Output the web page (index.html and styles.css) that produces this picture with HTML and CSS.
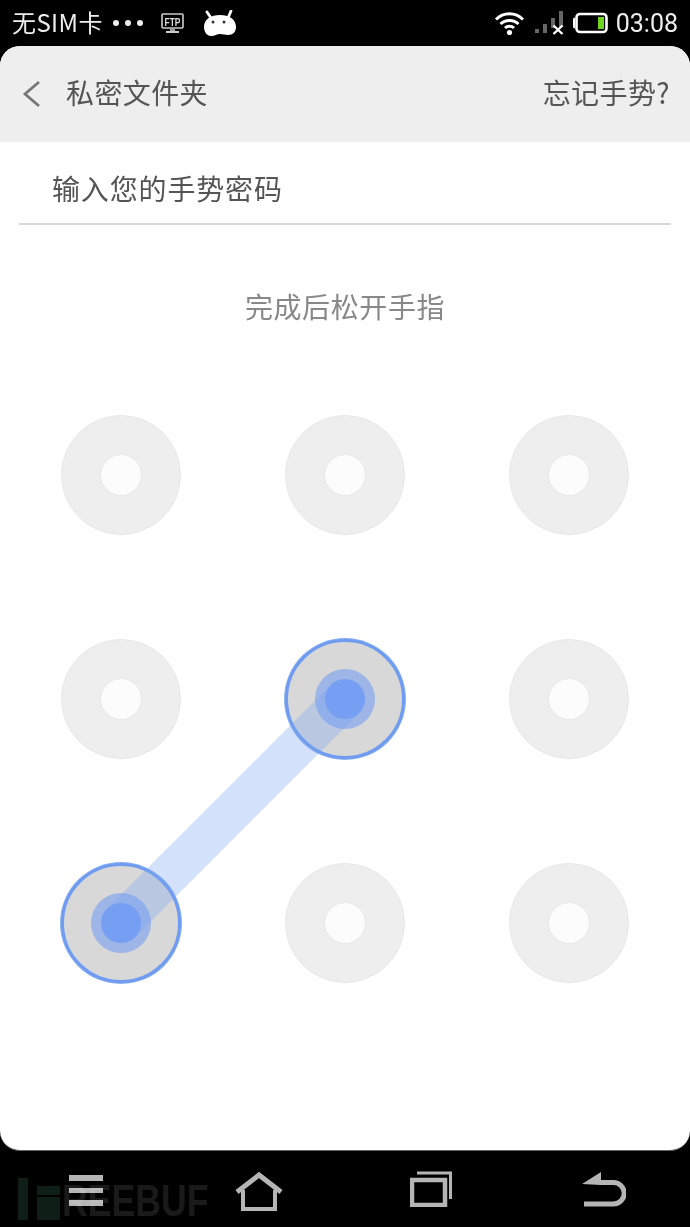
FILE: index.html
```html
<!DOCTYPE html>
<html lang="zh-CN">
  <head>
    <meta charset="UTF-8" />
    <meta name="viewport" content="width=device-width, initial-scale=1.0" />
    <title>私密文件夹</title>
    <link rel="stylesheet" href="styles.css">
  </head>
  <body>
    <div class="statusBar">
      <div class="statusLeft">
        <span class="carrier">无SIM卡</span>
        <div class="moreDots"><i></i><i></i><i></i></div>
        <svg class="ftpIcon" width="24" height="22" viewBox="0 0 24 22">
          <rect x="1" y="2" width="21" height="14" rx="1" fill="none" stroke="#ccc" stroke-width="1.6"/>
          <text x="3.500" y="13.500" textLength="16" lengthAdjust="spacingAndGlyphs" font-family="Liberation Sans" font-size="11" font-weight="700" fill="#ddd">FTP</text>
          <rect x="9" y="16" width="5" height="3" fill="#999"/>
          <rect x="5" y="19" width="13" height="2" fill="#ccc"/>
        </svg>
        <svg class="droidIcon" width="34" height="26" viewBox="0 0 34 26">
          <path d="M4 2l4 6M28 1l-3 7" stroke="#fff" stroke-width="2.800" stroke-linecap="round"/>
          <path d="M1 17C1 9 8 5 17 5s16 4 16 12c0 5-3 8-8 8-3 0-5-1-8-1s-5 2-9 2c-4 0-7-4-7-9z" fill="#fff"/>
          <circle cx="10" cy="12" r="1.500" fill="#333"/>
          <circle cx="21" cy="12" r="1.500" fill="#333"/>
        </svg>
      </div>
      <div class="statusRight">
        <svg width="31" height="24" viewBox="0 0 31 24">
          <path d="M2 8.500a19 19 0 0 1 27 0M6.500 13a13 13 0 0 1 18 0M11 17a6.500 6.500 0 0 1 9 0" fill="none" stroke="#fff" stroke-width="3"/>
          <circle cx="15.500" cy="21.500" r="2.600" fill="#fff"/>
        </svg>
        <svg class="signalIcon" width="30" height="24" viewBox="0 0 30 24">
          <rect x="0" y="18" width="4" height="4" fill="#666"/>
          <rect x="8" y="13" width="4" height="9" fill="#666"/>
          <rect x="16" y="7" width="4" height="10" fill="#666"/>
          <rect x="24" y="0" width="4" height="16" fill="#666"/>
          <path d="M18.500 14.500l9 8.500M27.500 14.500l-9 8.500" stroke="#fff" stroke-width="2.400"/>
        </svg>
        <svg class="batteryIcon" width="35" height="22" viewBox="0 0 35 22">
          <path d="M0 7.500a2 2 0 0 1 2-2V16.500a2 2 0 0 1-2-2z" fill="#fff"/>
          <rect x="3.500" y="2" width="30" height="18" rx="3.500" fill="none" stroke="#fff" stroke-width="2.600"/>
          <rect x="25" y="5" width="6" height="12" fill="#6fd420"/>
        </svg>
        <span class="clock">03:08</span>
      </div>
    </div>

    <div class="card">
      <div class="topBar">
        <div class="topLeft">
          <svg width="20" height="28" viewBox="0 0 20 28">
            <path d="M18 2L4 14l14 12" fill="none" stroke="#777" stroke-width="2.800"/>
          </svg>
          <span class="pageTitle">私密文件夹</span>
        </div>
        <span class="forgot">忘记手势?</span>
      </div>

      <div class="inputRow">输入您的手势密码</div>
      <div class="hint">完成后松开手指</div>

      <div class="patternGrid">
        <div class="dot"><div class="dotInner"></div></div>
        <div class="dot"><div class="dotInner"></div></div>
        <div class="dot"><div class="dotInner"></div></div>
        <div class="dot"><div class="dotInner"></div></div>
        <div class="dot active"><div class="dotInner"></div></div>
        <div class="dot"><div class="dotInner"></div></div>
        <div class="dot active"><div class="dotInner"></div></div>
        <div class="dot"><div class="dotInner"></div></div>
        <div class="dot"><div class="dotInner"></div></div>
        <svg class="patternLine" width="568" height="568" viewBox="0 0 568 568">
          <line x1="60" y1="508" x2="284" y2="284" stroke="#78a5f0" stroke-opacity="0.33" stroke-width="40"/>
        </svg>
      </div>
    </div>

    <div class="navBar">
      <div class="navSlot">
        <div class="menuIcon"><i></i><i></i><i></i></div>
      </div>
      <div class="navSlot">
        <svg width="48" height="40" viewBox="0 0 48 40">
          <path d="M2 21L24 4l22 17" fill="none" stroke="#b5b5b5" stroke-width="5"/>
          <path d="M8 19v19h32V19" fill="none" stroke="#b5b5b5" stroke-width="4"/>
        </svg>
      </div>
      <div class="navSlot">
        <svg width="42" height="36" viewBox="0 0 42 36">
          <path d="M7 2h33.500v26" fill="none" stroke="#b5b5b5" stroke-width="3"/>
          <rect x="2" y="9" width="33" height="25" fill="none" stroke="#b5b5b5" stroke-width="4.500"/>
        </svg>
      </div>
      <div class="navSlot">
        <svg width="44" height="37" viewBox="0 0 44 37">
          <path d="M0 13L19 1v13z" fill="#b5b5b5"/>
          <path d="M17 11.500h14.500a10.750 10.750 0 0 1 0 21.500H2" fill="none" stroke="#b5b5b5" stroke-width="5"/>
        </svg>
      </div>
      <div class="watermark">
        <div class="wmLogo"><i class="wmBar"></i><div class="wmBlocks"><i></i><i></i></div></div>
        <span class="wmText">REEBUF</span>
      </div>
    </div>
  </body>
</html>
```

FILE: styles.css
```css
html,
body {
  margin: 0;
  background: #000;
}

body {
  width: 690px;
  height: 1227px;
  overflow: hidden;
  font-family: "Noto Sans CJK SC", "Liberation Sans", sans-serif;
}

i {
  display: block;
}

/* status bar */
.statusBar {
  height: 46px;
  display: flex;
  justify-content: space-between;
  align-items: center;
  color: #fff;
  padding: 0 12px;
  box-sizing: border-box;
}

.statusLeft,
.statusRight {
  display: flex;
  align-items: center;
}

.carrier {
  font-size: 24px;
  letter-spacing: 0.4px;
  line-height: 46px;
  padding-bottom: 2px;
  color: #eee;
}

.moreDots {
  display: flex;
  gap: 6px;
  margin-left: 10px;
}

.moreDots i {
  width: 6px;
  height: 6px;
  border-radius: 50%;
  background: #eee;
}

.ftpIcon {
  margin-left: 18px;
}

.droidIcon {
  margin-left: 18px;
}

.signalIcon {
  margin-left: 10px;
}

.batteryIcon {
  margin-left: 8px;
}

.clock {
  font-family: Roboto, sans-serif;
  font-size: 25px;
  color: #eee;
  margin-left: 8px;
}

/* main card */
.card {
  height: 1105px;
  box-sizing: border-box;
  background: #fff;
  border-radius: 20px;
  border-bottom: 1px solid #666;
  overflow: hidden;
}

.topBar {
  height: 96px;
  background: #eee;
  display: flex;
  justify-content: space-between;
  align-items: center;
  padding: 0 20px 0 21px;
}

.topLeft {
  display: flex;
  align-items: center;
  gap: 25px;
}

.pageTitle,
.forgot {
  font-size: 28px;
  letter-spacing: 0.4px;
  padding-bottom: 5px;
  color: #555;
}

.inputRow {
  margin: 0 19px;
  height: 83px;
  line-height: 92px;
  padding-left: 33px;
  box-sizing: border-box;
  border-bottom: 2px solid #d8d8d8;
  font-size: 28px;
  letter-spacing: 0.85px;
  color: #555;
}

.hint {
  margin-top: 58px;
  height: 46px;
  line-height: 46px;
  text-align: center;
  font-size: 28px;
  letter-spacing: 0.6px;
  color: #888;
}

/* pattern lock */
.patternGrid {
  position: relative;
  margin: 86px 0 0 61px;
  width: 568px;
  display: grid;
  grid-template-columns: repeat(3, 120px);
  grid-template-rows: repeat(3, 120px);
  gap: 104px;
}

.dot {
  width: 120px;
  height: 120px;
  box-sizing: border-box;
  border-radius: 50%;
  background: #eee;
  border: 1px solid #e8e8e8;
  display: flex;
  justify-content: center;
  align-items: center;
}

.dotInner {
  width: 42px;
  height: 42px;
  box-sizing: border-box;
  border-radius: 50%;
  background: #fcfcfc;
  border: 1px solid #e8e8e8;
}

.dot.active {
  background: #d8d8d8;
  border: 3px solid #6f9cf0;
  box-shadow: 0 0 0 1px rgba(111, 156, 240, 0.8);
}

.dot.active .dotInner {
  position: relative;
  z-index: 2;
  width: 40px;
  height: 40px;
  background: #769ef2;
  border: none;
  box-shadow: 0 0 0 10px rgba(118, 158, 242, 0.6);
}

.patternLine {
  position: absolute;
  left: 0;
  top: 0;
  z-index: 1;
}

/* bottom nav */
.navBar {
  position: relative;
  height: 76px;
  box-sizing: border-box;
  display: grid;
  grid-template-columns: repeat(4, 1fr);
  padding-top: 20px;
  align-items: start;
}

.navSlot {
  display: flex;
  justify-content: center;
}

.menuIcon {
  width: 34px;
  display: flex;
  flex-direction: column;
  gap: 7px;
  margin-top: 4px;
}

.menuIcon i {
  height: 5.500px;
  background: #b5b5b5;
}

.watermark {
  position: absolute;
  left: 18px;
  top: 27px;
  display: flex;
  align-items: flex-end;
}

.wmLogo {
  display: flex;
  gap: 9px;
  height: 42px;
}

.wmBar {
  width: 10px;
  background: #0f1f18;
}

.wmBlocks {
  width: 23px;
  display: flex;
  flex-direction: column;
  justify-content: space-between;
  padding-top: 8px;
  box-sizing: border-box;
}

.wmBlocks i {
  height: 9px;
  background: #0f1f18;
}

.wmBlocks i:last-child {
  height: 23px;
}

.wmText {
  font-family: "Liberation Sans", sans-serif;
  font-weight: 700;
  font-size: 44px;
  line-height: 36px;
  margin: 0 0 1px 2px;
  color: #1a1a1a;
  mix-blend-mode: screen;
  transform: scaleX(0.81);
  transform-origin: left;
}
```
